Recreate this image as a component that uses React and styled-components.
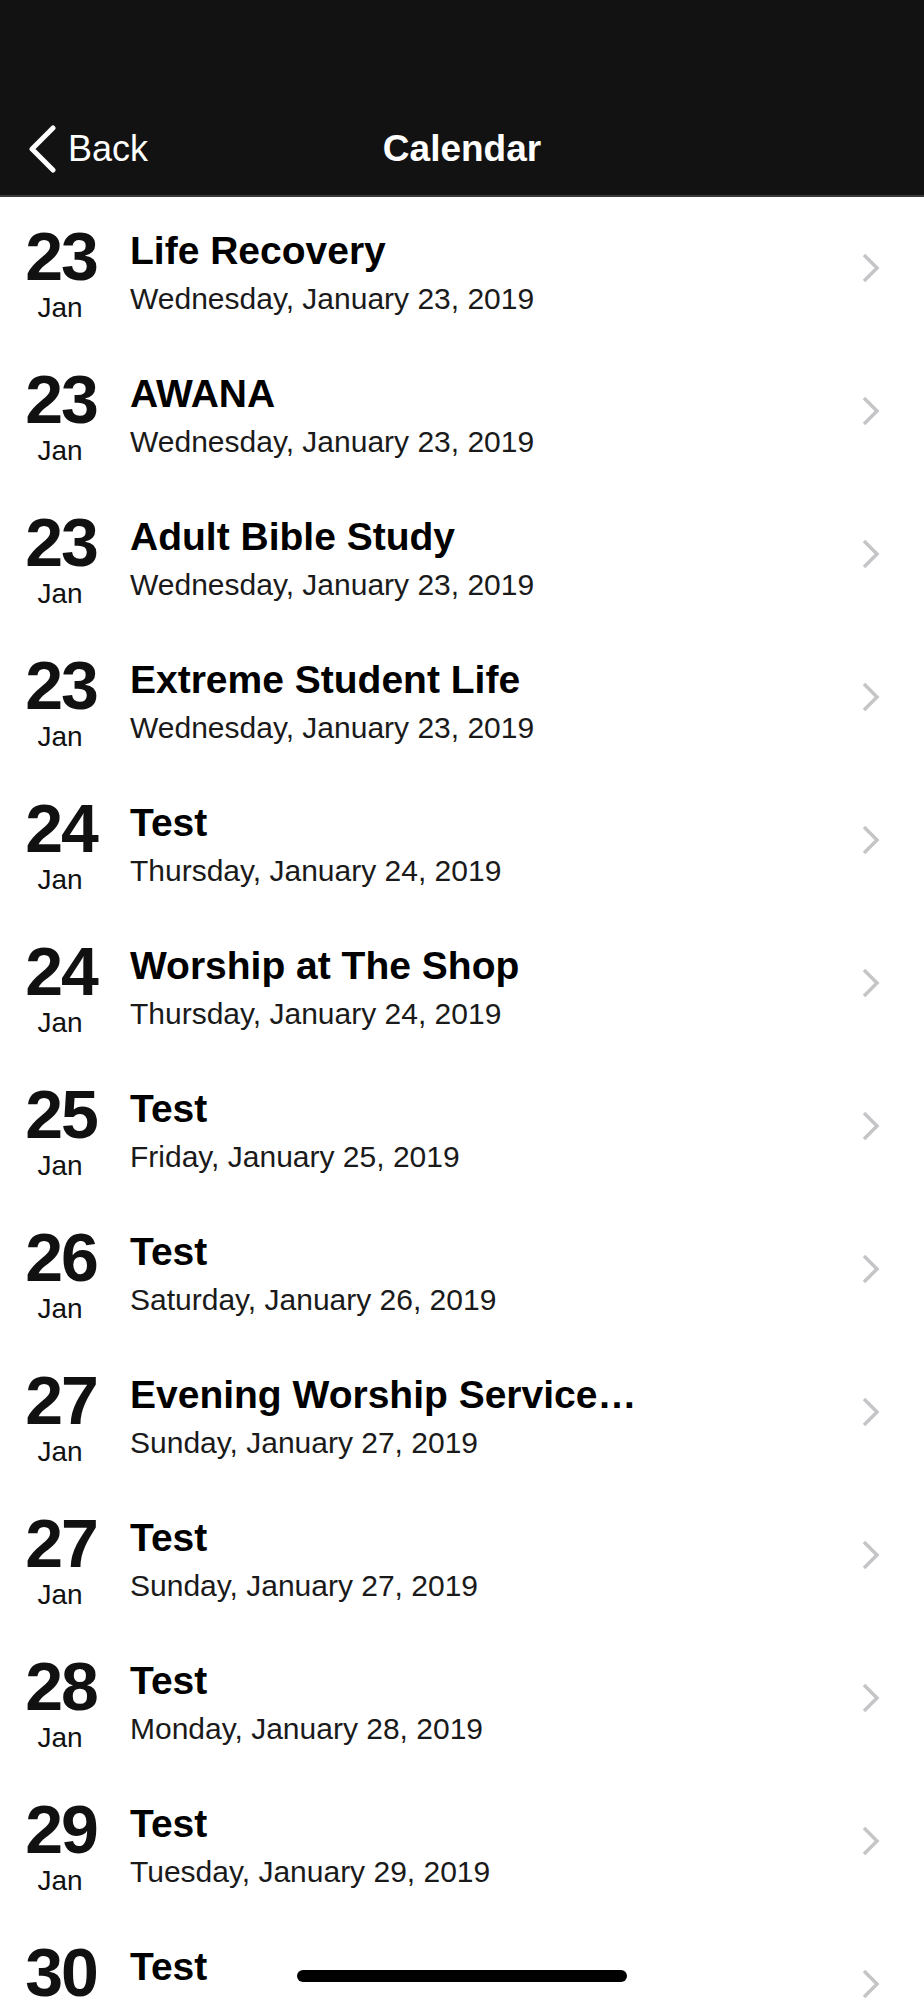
import styled, { createGlobalStyle } from "styled-components";

const GlobalStyle = createGlobalStyle`
  html, body {
    margin: 0;
    padding: 0;
    background: #fff;
    overflow: hidden;
  }
  body {
    font-family: "Liberation Sans", Arial, Helvetica, sans-serif;
    -webkit-font-smoothing: antialiased;
  }
`;

const events = [
  { day: 23, title: "Life Recovery", date: "Wednesday, January 23, 2019" },
  { day: 23, title: "AWANA", date: "Wednesday, January 23, 2019" },
  { day: 23, title: "Adult Bible Study", date: "Wednesday, January 23, 2019" },
  { day: 23, title: "Extreme Student Life", date: "Wednesday, January 23, 2019" },
  { day: 24, title: "Test", date: "Thursday, January 24, 2019" },
  { day: 24, title: "Worship at The Shop", date: "Thursday, January 24, 2019" },
  { day: 25, title: "Test", date: "Friday, January 25, 2019" },
  { day: 26, title: "Test", date: "Saturday, January 26, 2019" },
  { day: 27, title: "Evening Worship Service…", date: "Sunday, January 27, 2019" },
  { day: 27, title: "Test", date: "Sunday, January 27, 2019" },
  { day: 28, title: "Test", date: "Monday, January 28, 2019" },
  { day: 29, title: "Test", date: "Tuesday, January 29, 2019" },
  { day: 30, title: "Test", date: "Wednesday, January 30, 2019" },
];

const Screen = styled.div`
  width: 924px;
  min-height: 2000px;
  background: #fff;
`;

const Header = styled.header`
  background: #121212;
  height: 197px;
  box-sizing: border-box;
  padding-top: 100px;
  border-bottom: 2px solid #3a3a3a;
`;

const NavBar = styled.nav`
  display: grid;
  grid-template-columns: 1fr auto 1fr;
  align-items: center;
  height: 95px;
  color: #fff;
`;

const BackButton = styled.div`
  display: flex;
  align-items: center;
  gap: 10px;
  padding-left: 26px;
  font-size: 36px;
  line-height: 36px;
  margin-top: 2px;
`;

const Title = styled.h1`
  margin: 0;
  font-size: 37px;
  line-height: 37px;
  font-weight: 700;
  margin-top: 2px;
`;

const List = styled.ul`
  list-style: none;
  margin: 0;
  padding: 0;
`;

const Row = styled.li`
  display: flex;
  height: 143px;
  box-sizing: border-box;
`;

const DateCol = styled.div`
  width: 120px;
  flex: none;
  text-align: center;
  padding-top: 25px;
  color: #111;
`;

const Day = styled.div`
  font-size: 68px;
  line-height: 68px;
  font-weight: 700;
  letter-spacing: -2px;
  padding-left: 2px;
`;

const Month = styled.div`
  font-size: 28px;
  line-height: 28px;
  margin-top: 4px;
`;

const Info = styled.div`
  flex: 1;
  min-width: 0;
  padding-top: 34px;
  padding-left: 10px;
`;

const EventTitle = styled.div`
  font-size: 39px;
  line-height: 39px;
  font-weight: 700;
  color: #000;
  white-space: nowrap;
`;

const EventDate = styled.div`
  margin-top: 14px;
  font-size: 30px;
  line-height: 30px;
  color: #1a1a1a;
`;

const Chevron = styled.svg`
  align-self: center;
  flex: none;
  margin-right: 43px;
  margin-top: -2px;
`;

const HomeIndicator = styled.div`
  position: fixed;
  left: 297px;
  top: 1970px;
  width: 330px;
  height: 12px;
  border-radius: 6px;
  background: #000;
`;

export default function App() {
  return (
    <Screen>
      <GlobalStyle />
      <Header>
        <NavBar>
          <BackButton>
            <svg width="32" height="48" viewBox="0 0 32 48">
              <polyline
                points="27,3 6,24 27,45"
                fill="none"
                stroke="#fff"
                strokeWidth="5"
                strokeLinecap="round"
                strokeLinejoin="round"
              />
            </svg>
            <span>Back</span>
          </BackButton>
          <Title>Calendar</Title>
          <div />
        </NavBar>
      </Header>
      <List>
        {events.map((e, i) => (
          <Row key={i}>
            <DateCol>
              <Day>{e.day}</Day>
              <Month>Jan</Month>
            </DateCol>
            <Info>
              <EventTitle>{e.title}</EventTitle>
              <EventDate>{e.date}</EventDate>
            </Info>
            <Chevron width="20" height="32" viewBox="0 0 20 32">
              <polyline
                points="3,3 16,16 3,29"
                fill="none"
                stroke="#c5c5c8"
                strokeWidth="3.5"
              />
            </Chevron>
          </Row>
        ))}
      </List>
      <HomeIndicator />
    </Screen>
  );
}
